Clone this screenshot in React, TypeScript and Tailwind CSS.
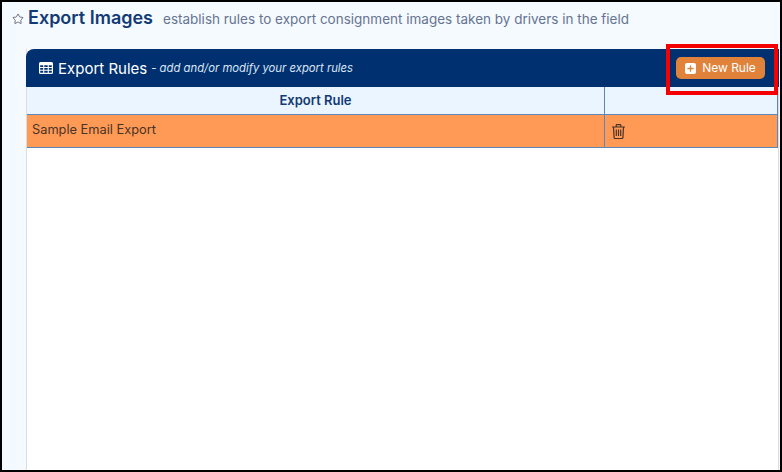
import { Plus, Star } from 'lucide-react';

function TableIcon() {
  return (
    <svg width="14" height="12" viewBox="0 0 14 12" className="mr-[5px] mb-[1px]">
      <path
        fillRule="evenodd"
        fill="currentColor"
        d="M1.5 0h11A1.5 1.5 0 0 1 14 1.500v9a1.500 1.500 0 0 1-1.500 1.500h-11A1.500 1.500 0 0 1 0 10.500v-9A1.500 1.500 0 0 1 1.500 0ZM1.200 3.200v1.900h3v-1.900ZM5.300 3.200v1.900h3.400v-1.900ZM9.800 3.200v1.900h3v-1.900ZM1.200 6.100v1.700h3v-1.700ZM5.300 6.100v1.700h3.400v-1.700ZM9.800 6.100v1.700h3v-1.700ZM1.200 8.800v2h3v-2ZM5.300 8.800v2h3.400v-2ZM9.800 8.800v2h3v-2Z"
      />
    </svg>
  );
}

function TrashIcon() {
  return (
    <svg width="13" height="15" viewBox="0 0 13 15" fill="none" stroke="#4a3226" strokeWidth="1.200">
      <path d="M0 3h13M4.200 3V1.200A.7.7 0 0 1 4.900.6h3.200a.7.700 0 0 1 .7.6V3M1.500 3l.6 10.600a1 1 0 0 0 1 .9h6.800a1 1 0 0 0 1-.9L11.500 3" />
      <path d="M4.300 5.500v6.500M6.500 5.500v6.500M8.700 5.500v6.500" />
    </svg>
  );
}

export default function App() {
  return (
    <div className="relative w-[782px] h-[472px] overflow-hidden border-2 border-black bg-[#f5faff] font-['Inter',sans-serif]">
      <div className="flex items-center h-[30px] pl-[10px] mt-[1px]">
        <Star size={12} strokeWidth={1.5} className="text-[#445] mr-[4px] mt-[2px]" />
        <h1 className="text-[18px] font-semibold text-[#123a74] leading-none mb-[1px]">Export Images</h1>
        <span className="ml-[10px] text-[13.500px] text-[#66748f] leading-none mt-[3px]">
          establish rules to export consignment images taken by drivers in the field
        </span>
      </div>

      <div className="ml-[24px] mr-[1px] mt-[16px] h-[430px] flex flex-col bg-white border-x border-[#d9dde2] border-b">
        <div className="flex items-center justify-between h-[38px] -mx-px pl-[13px] pr-[15px] bg-[#003070] rounded-tl-[8px] text-white shrink-0">
          <div className="flex items-center">
            <TableIcon />
            <span className="text-[15px] leading-none">Export Rules</span>
            <span className="ml-[4px] mt-[2px] text-[11.300px] italic leading-none text-[#dbe6f5]">- add and/or modify your export rules</span>
          </div>
          <button className="flex items-center h-[22px] w-[89px] justify-center gap-[6px] rounded-[5px] bg-[#e0823a] text-[12px] text-white mr-[-1px]">
            <span className="flex items-center justify-center w-[11px] h-[11px] bg-white rounded-[2px]">
              <Plus size={9} strokeWidth={3.5} className="text-[#e0823a]" />
            </span>
            New Rule
          </button>
        </div>

        <div className="grid grid-cols-[578px_1fr] h-[28px] bg-[#eaf5ff] border-b border-[#5b88b8] shrink-0">
          <div className="flex items-center justify-center text-[13px] font-semibold text-[#123a74] border-r border-[#5b88b8]">
            Export Rule
          </div>
          <div className="border-r border-[#5b88b8]" />
        </div>

        <div className="grid grid-cols-[578px_1fr] h-[33px] bg-[#ff9a56] border-b border-[#5b88b8] shrink-0">
          <div className="flex items-center pl-[5px] pb-[3px] text-[12.800px] text-[#4a3226] border-r border-[#5b88b8]">
            Sample Email Export
          </div>
          <div className="flex items-center pl-[7px] border-r border-[#5b88b8]">
            <TrashIcon />
          </div>
        </div>
      </div>

      <div className="absolute left-[664px] top-[42px] w-[112px] h-[51px] border-[4px] border-[#f50000]" />
    </div>
  );
}
